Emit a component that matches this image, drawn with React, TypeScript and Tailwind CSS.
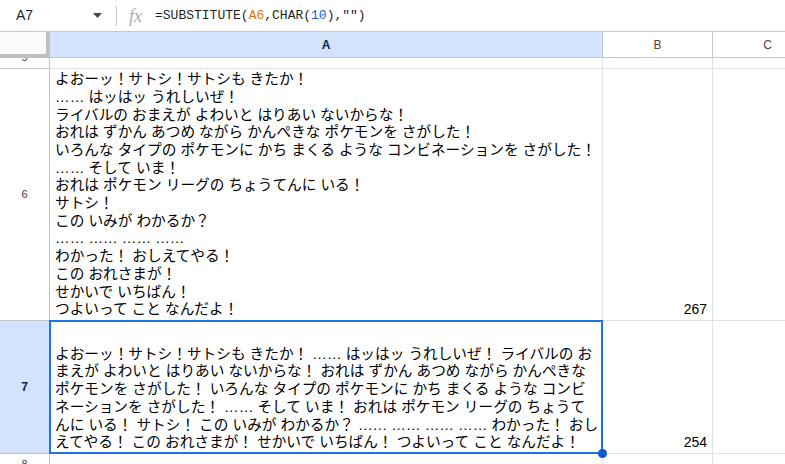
import React from 'react';

const row6Lines = [
  'よおーッ！サトシ！サトシも きたか！',
  '…… はッはッ うれしいぜ！',
  'ライバルの おまえが よわいと はりあい ないからな！',
  'おれは ずかん あつめ ながら かんぺきな ポケモンを さがした！',
  'いろんな タイプの ポケモンに かち まくる ような コンビネーションを さがした！',
  '…… そして いま！',
  'おれは ポケモン リーグの ちょうてんに いる！',
  'サトシ！',
  'この いみが わかるか？',
  '…… …… …… ……',
  'わかった！ おしえてやる！',
  'この おれさまが！',
  'せかいで いちばん！',
  'つよいって こと なんだよ！',
];

const row7Lines = [
  'よおーッ！サトシ！サトシも きたか！ …… はッはッ うれしいぜ！ ライバルの お',
  'まえが よわいと はりあい ないからな！ おれは ずかん あつめ ながら かんぺきな',
  'ポケモンを さがした！ いろんな タイプの ポケモンに かち まくる ような コンビ',
  'ネーションを さがした！ …… そして いま！ おれは ポケモン リーグの ちょうて',
  'んに いる！ サトシ！ この いみが わかるか？ …… …… …… …… わかった！ おし',
  'えてやる！ この おれさまが！ せかいで いちばん！ つよいって こと なんだよ！',
];

function FormulaBar() {
  return (
    <div className="flex h-[31px] items-center bg-white">
      <div className="flex w-[116px] items-center justify-between pl-[16px] pr-[14px]">
        <span className="text-[14px] text-[#1f1f1f]">A7</span>
        <svg width="9" height="5" viewBox="0 0 9 5">
          <path d="M0 0 L9 0 L4.5 5 Z" fill="#444746" />
        </svg>
      </div>
      <div className="h-[20px] w-px bg-[#c4c7c5]" />
      <span className="ml-[12px] w-[26px] font-['Liberation_Serif',serif] text-[18px] italic leading-none text-[#a8abae]">fx</span>
      <span className="font-['Liberation_Mono',monospace] text-[13px] text-[#1f1f1f]">
        =SUBSTITUTE(<span className="text-[#e8710a]">A6</span>,CHAR(<span className="text-[#1a5fd6]">10</span>),"")
      </span>
    </div>
  );
}

function ColHeader({ label, active }: { label: string; active?: boolean }) {
  return (
    <div
      className={`flex items-center justify-center border-r border-b border-[#c4c7c5] text-[12px] ${
        active ? 'bg-[#d3e3fd] font-bold text-[#041e49]' : 'bg-white text-[#444746]'
      }`}
    >
      {label}
    </div>
  );
}

function RowHeader({ label, active, align = 'center' }: { label: string; active?: boolean; align?: 'center' | 'end' | 'start' }) {
  const alignCls = align === 'end' ? 'items-end' : align === 'start' ? 'items-start' : 'items-center';
  return (
    <div
      className={`flex overflow-hidden border-r border-b border-[#c4c7c5] text-[11px] ${alignCls} justify-center ${
        active ? 'bg-[#d3e3fd] font-bold text-[#041e49]' : 'bg-white text-[#444746]'
      }`}
    >
      <span className={`flex h-[21px] shrink-0 items-center ${active ? 'text-[12px]' : ''}`}>{label}</span>
    </div>
  );
}

function Cell({ children, className = '' }: { children?: React.ReactNode; className?: string }) {
  return <div className={`border-r border-b border-[#e1e1e1] ${className}`}>{children}</div>;
}

export default function App() {
  return (
    <div className="h-[464px] w-[785px] overflow-hidden bg-white font-['Liberation_Sans','Noto_Sans_CJK_JP',sans-serif]">
      <FormulaBar />
      <div className="grid grid-cols-[50px_553px_110px_110px] grid-rows-[26px_11px_252px_133px_20px] border-t border-[#c4c7c5]">
        {/* header row */}
        <div className="border-r-4 border-b-4 border-[#bfbfbf] bg-[#f8f9fa]" />
        <ColHeader label="A" active />
        <ColHeader label="B" />
        <ColHeader label="C" />

        {/* row 5, mostly scrolled out */}
        <RowHeader label="5" align="end" />
        <Cell />
        <Cell />
        <Cell />

        {/* row 6 */}
        <RowHeader label="6" />
        <Cell className="flex flex-col justify-end overflow-hidden pb-[1px] pl-[5px] text-[14.67px] leading-[17.7px] text-black">
          {row6Lines.map((l, i) => (
            <div key={i} className="whitespace-nowrap">{l}</div>
          ))}
        </Cell>
        <Cell className="flex items-end justify-end pr-[5px] pb-[1px] text-[14px] leading-[17.7px] text-black">267</Cell>
        <Cell />

        {/* row 7, selected */}
        <RowHeader label="7" active />
        <Cell className="relative flex flex-col justify-end pb-[1px] pl-[5px] text-[14.67px] leading-[17.7px] text-black">
          {row7Lines.map((l, i) => (
            <div key={i} className="whitespace-nowrap">{l}</div>
          ))}
          <div className="pointer-events-none absolute -top-px -left-px -right-px -bottom-px border-2 border-[#1a73e8]" />
          <div className="absolute -right-[5px] -bottom-[5px] h-[9px] w-[9px] rounded-full bg-[#0b57d0]" />
        </Cell>
        <Cell className="flex items-end justify-end pr-[5px] pb-[1px] text-[14px] leading-[17.7px] text-black">254</Cell>
        <Cell />

        {/* row 8, partly visible */}
        <RowHeader label="8" align="start" />
        <Cell />
        <Cell />
        <Cell />
      </div>
    </div>
  );
}
